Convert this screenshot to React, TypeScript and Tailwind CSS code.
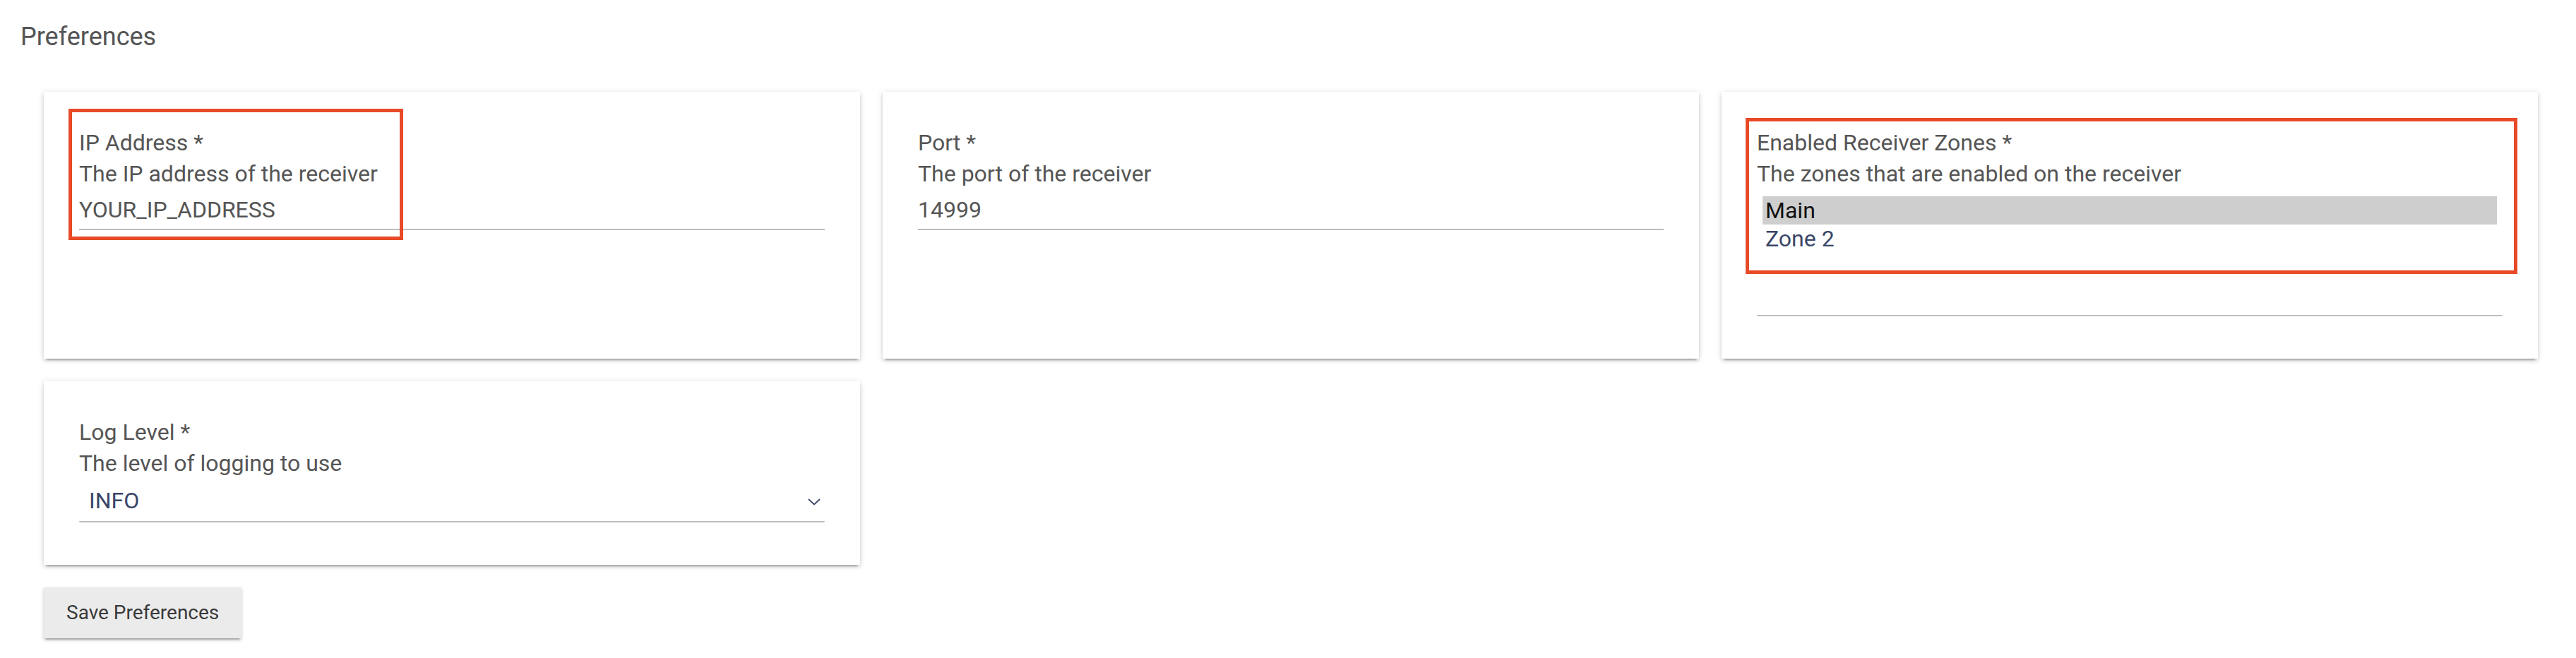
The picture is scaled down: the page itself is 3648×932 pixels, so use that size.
import React from "react";

const font = { fontFamily: "Roboto, 'Noto Sans', Arial, sans-serif" };

function Label({ title, desc }: { title: string; desc: string }) {
  return (
    <>
      <div className="text-[32px] leading-[44px] text-[#555555]">{title}</div>
      <div className="text-[32px] leading-[44px] text-[#555555]">{desc}</div>
    </>
  );
}

function TextField({ value }: { value: string }) {
  return (
    <div className="pt-[7px] pb-[5px] border-b-2 border-[#bdbdbd] text-[32px] leading-[44px] text-[#555555]">
      {value}
    </div>
  );
}

export default function App() {
  return (
    <div className="w-[3648px] min-h-[932px] bg-white" style={font}>
      <div className="pl-[29px] pt-[31px] text-[36px] leading-[42px] text-[#555555]">Preferences</div>
      <div className="mt-[57px] pl-[62px] pr-[54px]">
        <div className="grid grid-cols-3 gap-[32px]">
          {/* IP Address */}
          <div className="relative bg-white px-[50px] pt-[50px] pb-[60px] shadow-[0_3px_5px_rgba(0,0,0,0.14),0_6px_2px_-4px_rgba(0,0,0,0.22),0_1px_10px_rgba(0,0,0,0.10)]">
            <Label title="IP Address *" desc="The IP address of the receiver" />
            <TextField value="YOUR_IP_ADDRESS" />
            <div className="absolute left-[35px] top-[24px] w-[474px] h-[186px] border-[5px] border-[#e84a27] pointer-events-none" />
          </div>
          {/* Port */}
          <div className="relative bg-white px-[50px] pt-[50px] pb-[60px] shadow-[0_3px_5px_rgba(0,0,0,0.14),0_6px_2px_-4px_rgba(0,0,0,0.22),0_1px_10px_rgba(0,0,0,0.10)]">
            <Label title="Port *" desc="The port of the receiver" />
            <TextField value="14999" />
          </div>
          {/* Zones */}
          <div className="relative bg-white px-[50px] pt-[50px] pb-[60px] shadow-[0_3px_5px_rgba(0,0,0,0.14),0_6px_2px_-4px_rgba(0,0,0,0.22),0_1px_10px_rgba(0,0,0,0.10)]">
            <Label title="Enabled Receiver Zones *" desc="The zones that are enabled on the receiver" />
            <div className="h-[180px] pt-[10px] px-[8px] border-b-2 border-[#bdbdbd] rounded-b-[2px]">
              <div className="h-[40px] leading-[40px] pl-[4px] bg-[#cecece] text-[32px] text-[#111111]">Main</div>
              <div className="h-[40px] leading-[40px] pl-[4px] text-[32px] text-[#3a4668]">Zone 2</div>
            </div>
            <div className="absolute left-[34px] top-[37px] w-[1093px] h-[221px] border-[5px] border-[#e84a27] pointer-events-none" />
          </div>
          {/* Log Level */}
          <div className="relative bg-white px-[50px] pt-[50px] pb-[60px] shadow-[0_3px_5px_rgba(0,0,0,0.14),0_6px_2px_-4px_rgba(0,0,0,0.22),0_1px_10px_rgba(0,0,0,0.10)]">
            <Label title="Log Level *" desc="The level of logging to use" />
            <div className="flex items-center justify-between pt-[9px] pb-[7px] pl-[14px] pr-[6px] border-b-2 border-[#bdbdbd] rounded-b-[2px]">
              <span className="text-[32px] leading-[44px] text-[#3a4668]">INFO</span>
              <svg width="18" height="10" viewBox="0 0 18 10" className="mt-[4px]">
                <polyline points="1,1 9,8.5 17,1" fill="none" stroke="#414b6b" strokeWidth="2" />
              </svg>
            </div>
          </div>
        </div>
        <button className="mt-[32px] w-[280px] h-[72px] bg-[#ebebeb] text-left pl-[32px] text-[28px] leading-[36px] text-[#3a3a3a] shadow-[0_3px_4px_rgba(0,0,0,0.16),0_5px_2px_-3px_rgba(0,0,0,0.2),0_1px_6px_rgba(0,0,0,0.08)]">
          Save Preferences
        </button>
      </div>
    </div>
  );
}
